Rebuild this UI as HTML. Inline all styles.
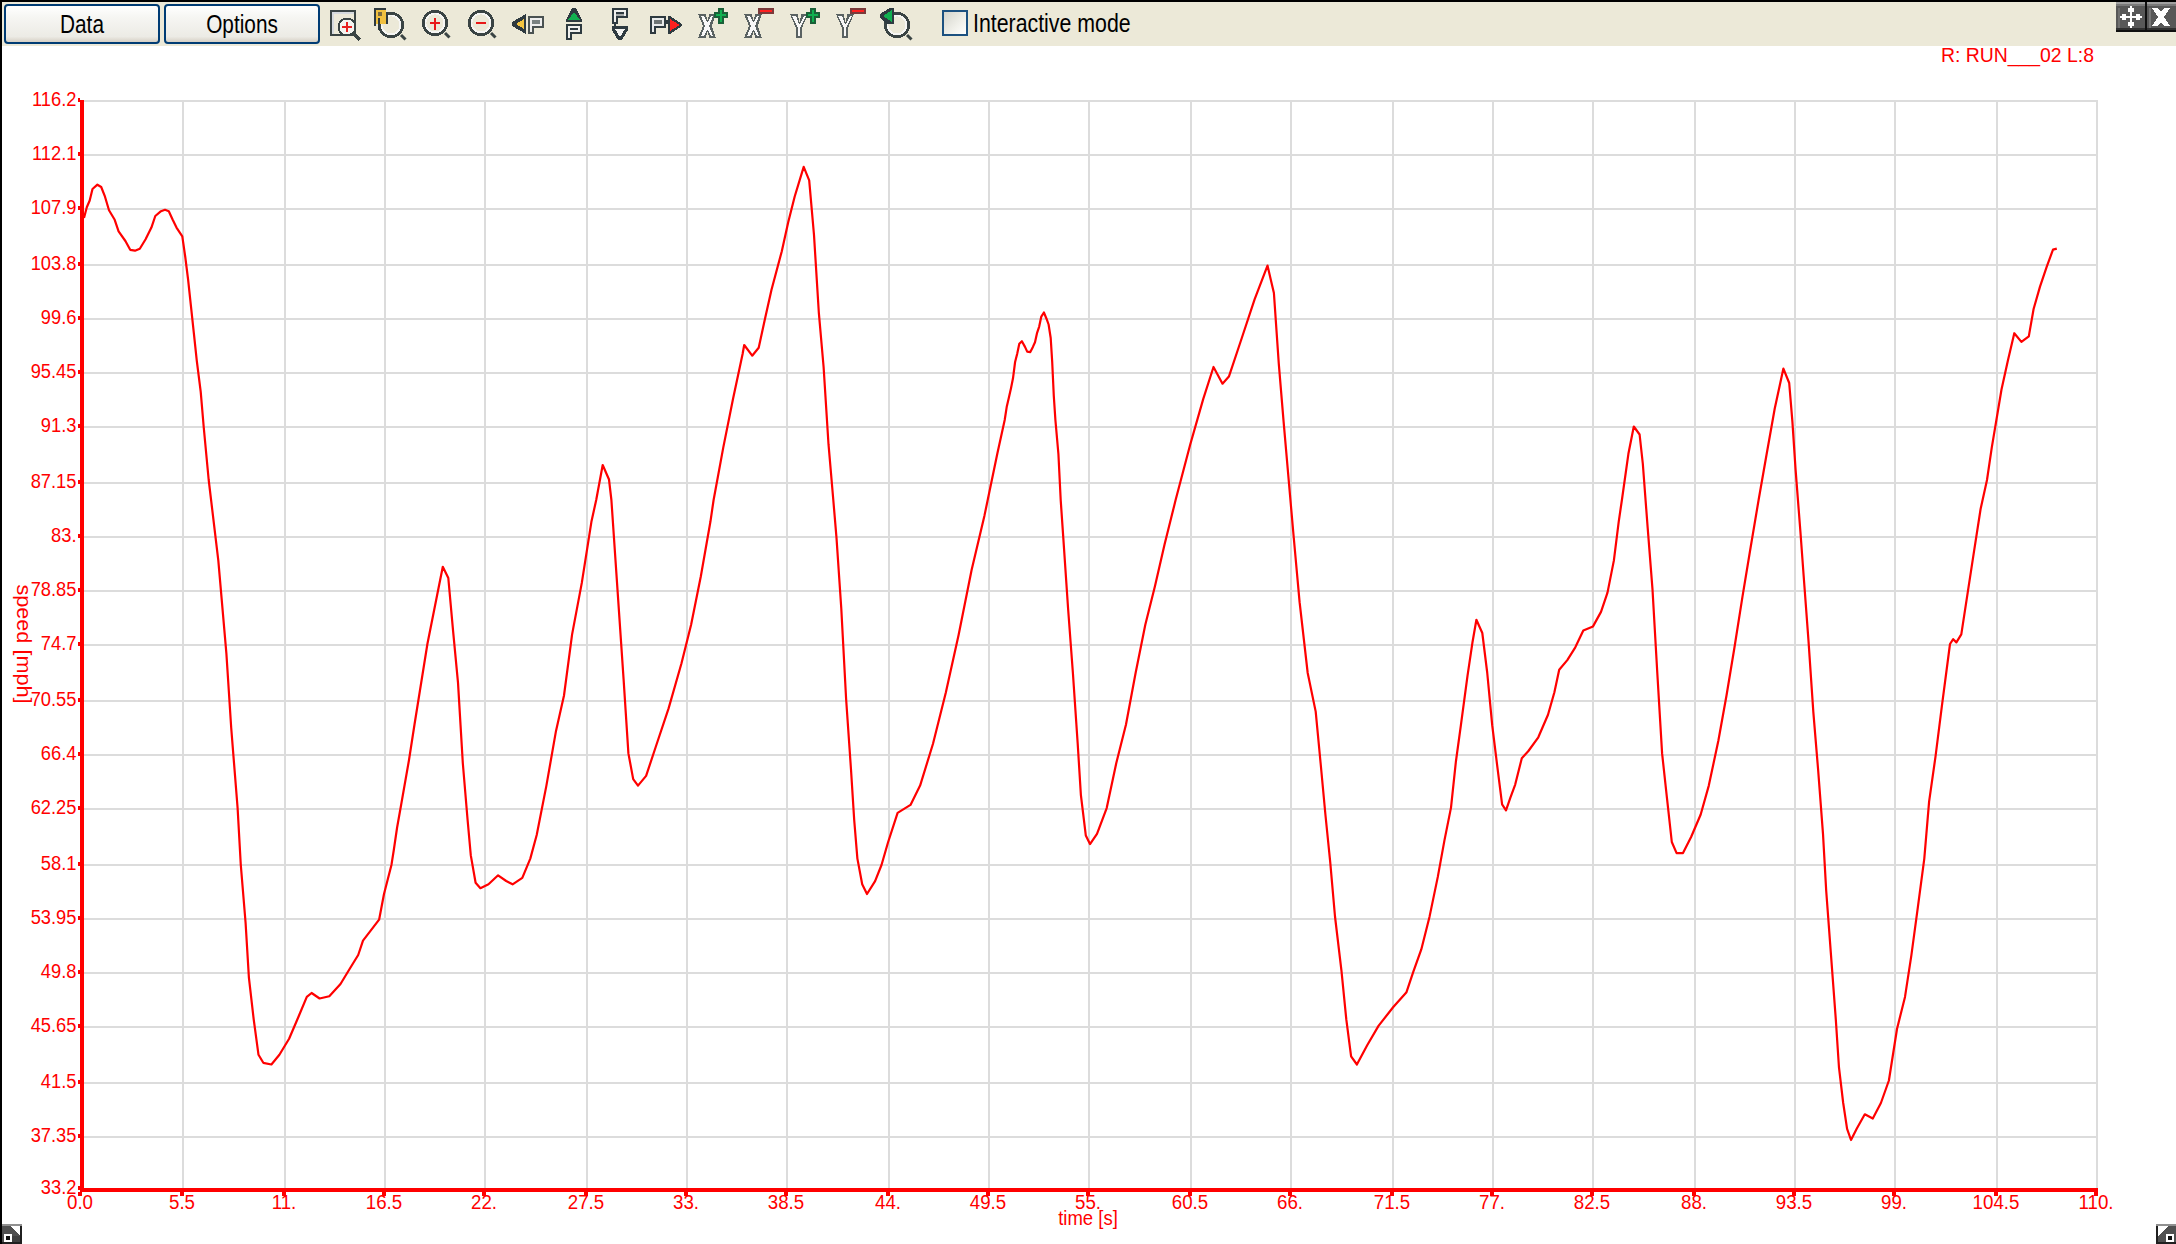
<!DOCTYPE html>
<html><head><meta charset="utf-8">
<style>
html,body{margin:0;padding:0;width:2176px;height:1244px;overflow:hidden;background:#fff;position:relative;font-family:"Liberation Sans",sans-serif;}
.bl{position:absolute;left:0;top:0;width:2px;height:1244px;background:#000}
.bt{position:absolute;left:0;top:0;width:2176px;height:2px;background:#000}
.tb{position:absolute;left:2px;top:2px;width:2174px;height:44px;background:#ece9d8}
.btn{position:absolute;top:4px;height:36px;width:152px;border:2px solid #003c74;border-radius:4px;background:linear-gradient(#ffffff 0%,#f6f6f3 30%,#ecebe5 85%,#d6d0c5 100%);}
.btn span{position:absolute;left:0;right:0;top:4.5px;text-align:center;font-size:25.7px;line-height:26px;color:#000;transform:scaleX(0.81);}
.yl{position:absolute;left:0;width:76.5px;text-align:right;color:#ff0000;font-size:19.7px;line-height:20px;transform-origin:100% 50%;transform:scaleX(0.93);}
.xl{position:absolute;top:1192px;width:80px;text-align:center;color:#ff0000;font-size:19.7px;line-height:20px;transform:scaleX(0.95);}
svg{position:absolute;left:0;top:0}
</style></head><body>
<div class="tb"></div>
<div class="bt"></div><div class="bl"></div>
<div class="btn" style="left:4px"><span>Data</span></div>
<div class="btn" style="left:164px"><span>Options</span></div>
<svg width="2176" height="50" viewBox="0 0 2176 50" style="position:absolute;left:0;top:0" shape-rendering="crispEdges">

<!-- icon 1: zoom box -->
<rect x="331" y="11" width="24" height="24" fill="none" stroke="#3a4444" stroke-width="2"/>
<rect x="332" y="12" width="22" height="2" fill="#d6dade"/>
<rect x="332" y="12" width="2" height="22" fill="#d6dade"/>
<circle cx="347" cy="27" r="8.5" fill="#f4f4f0" stroke="#3a4444" stroke-width="2"/>
<rect x="342" y="26" width="10" height="2" fill="#e82020"/>
<rect x="346" y="22" width="2" height="10" fill="#e82020"/>
<line x1="355" y1="35" x2="360" y2="40" stroke="#3a4444" stroke-width="3"/>
<!-- icon 2: zoom R -->
<g transform="translate(391,25)">
  <circle cx="0" cy="0" r="11.8" fill="none" stroke="#3a4444" stroke-width="2.6"/>
  <circle cx="0" cy="0" r="9.5" fill="none" stroke="#f6f6f4" stroke-width="1.8"/>
  <line x1="10" y1="10" x2="14.5" y2="14.5" stroke="#3a4444" stroke-width="3" shape-rendering="auto"/>
</g>
<rect x="374" y="8" width="12" height="2" fill="#2e3a40"/>
<rect x="374" y="8" width="2" height="18" fill="#2e3a40"/>
<rect x="376" y="10" width="10" height="14" fill="#f0c040"/>
<rect x="378" y="12" width="4" height="4" fill="#7a6a40"/>
<rect x="386" y="12" width="2" height="12" fill="#2e3a40"/>
<rect x="378" y="18" width="2" height="12" fill="#2e3a40"/>
<!-- icon 3: zoom in -->
<g transform="translate(435,23)">
  <circle cx="0" cy="0" r="11.8" fill="none" stroke="#3a4444" stroke-width="2.6"/>
  <circle cx="0" cy="0" r="9.5" fill="none" stroke="#f6f6f4" stroke-width="1.8"/>
  <line x1="10" y1="10" x2="14.5" y2="14.5" stroke="#3a4444" stroke-width="3" shape-rendering="auto"/>
</g>
<rect x="430" y="22" width="10" height="2" fill="#e81818"/>
<rect x="434" y="18" width="2" height="12" fill="#e81818"/>
<!-- icon 4: zoom out -->
<g transform="translate(481,23)">
  <circle cx="0" cy="0" r="11.8" fill="none" stroke="#3a4444" stroke-width="2.6"/>
  <circle cx="0" cy="0" r="9.5" fill="none" stroke="#f6f6f4" stroke-width="1.8"/>
  <line x1="10" y1="10" x2="14.5" y2="14.5" stroke="#3a4444" stroke-width="3" shape-rendering="auto"/>
</g>
<rect x="476" y="22" width="10" height="2" fill="#e81818"/>
<!-- icon 5: yellow left arrow + P -->
<polygon points="512,22 526,14 526,34 512,26" fill="#2e3a40"/>
<polygon points="516,24 524,19 524,29" fill="#f4c440"/>
<rect x="528" y="16" width="16" height="12" fill="#4a5252"/>
<rect x="528" y="16" width="6" height="18" fill="#4a5252"/>
<rect x="530" y="18" width="12" height="8" fill="#eeeeee"/>
<rect x="530" y="18" width="2" height="14" fill="#eeeeee"/>
<rect x="532" y="20" width="8" height="4" fill="#7a8282"/>
<!-- icon 6: green up + P -->
<polygon points="572,8 576,8 582,20 582,22 566,22 566,20" fill="#2e3a40"/>
<polygon points="574,12 580,20 568,20" fill="#10b050"/>
<rect x="566" y="24" width="16" height="10" fill="#2e3a40"/>
<rect x="566" y="24" width="6" height="16" fill="#2e3a40"/>
<rect x="568" y="26" width="12" height="6" fill="#f0f0ee"/>
<rect x="568" y="26" width="2" height="12" fill="#f0f0ee"/>
<rect x="570" y="28" width="8" height="2" fill="#2e3a40"/>
<!-- icon 7: P + down triangle -->
<rect x="612" y="8" width="16" height="10" fill="#2e3a40"/>
<rect x="612" y="8" width="6" height="16" fill="#2e3a40"/>
<rect x="614" y="10" width="12" height="6" fill="#f0f0ee"/>
<rect x="614" y="10" width="2" height="12" fill="#f0f0ee"/>
<rect x="616" y="12" width="8" height="2" fill="#2e3a40"/>
<rect x="616" y="14" width="8" height="2" fill="#a4a8a8"/>
<rect x="614" y="24" width="2" height="2" fill="#2e3a40"/>
<polygon points="612,26 628,26 628,30 622,40 618,40 612,30" fill="#2e3a40"/>
<polygon points="615,29 625,29 620,37" fill="#f4f4f2"/>
<!-- icon 8: P + red right arrow -->
<rect x="650" y="16" width="16" height="12" fill="#2e3a40"/>
<rect x="650" y="16" width="6" height="18" fill="#2e3a40"/>
<rect x="652" y="18" width="12" height="8" fill="#e8eaea"/>
<rect x="652" y="18" width="2" height="14" fill="#e8eaea"/>
<rect x="654" y="20" width="8" height="4" fill="#6e7474"/>
<rect x="666" y="20" width="2" height="4" fill="#2e3a40"/>
<polygon points="668,16 670,16 682,24 682,26 670,34 668,34" fill="#2e3a40"/>
<polygon points="670,19 680,25 670,31" fill="#ff2020"/>
<!-- icon 9: X+ -->
<g>
<polygon points="698,14 706,14 707,20 708,20 709,14 716,14 712,26 716,38 709,38 708,32 707,32 706,38 698,38 703,26" fill="#5a6262"/>
<polygon points="701,16 704,16 707,22 708,22 711,16 713,16 709,26 713,36 711,36 708,30 707,30 704,36 701,36 705,26" fill="#f8f8f8"/>
</g>
<rect x="718" y="8" width="6" height="16" fill="#1a6038"/>
<rect x="714" y="12" width="14" height="6" fill="#1a6038"/>
<rect x="720" y="10" width="2" height="12" fill="#10b050"/>
<rect x="716" y="14" width="10" height="2" fill="#10b050"/>
<!-- icon 10: X- -->
<g transform="translate(46,0)">
<polygon points="698,14 706,14 707,20 708,20 709,14 716,14 712,26 716,38 709,38 708,32 707,32 706,38 698,38 703,26" fill="#5a6262"/>
<polygon points="701,16 704,16 707,22 708,22 711,16 713,16 709,26 713,36 711,36 708,30 707,30 704,36 701,36 705,26" fill="#f8f8f8"/>
</g>
<rect x="758" y="8" width="16" height="6" fill="#7a3a3a"/>
<rect x="760" y="10" width="12" height="2" fill="#ff2020"/>
<!-- icon 11: Y+ -->
<g>
<polygon points="790,14 798,14 799,22 800,22 801,14 808,14 802,28 802,38 796,38 796,28" fill="#5a6262"/>
<polygon points="792,16 796,16 799,24 800,24 804,16 806,16 800,28 800,36 798,36 798,28" fill="#f8f8f8"/>
</g>
<rect x="810" y="8" width="6" height="16" fill="#1a6038"/>
<rect x="806" y="12" width="14" height="6" fill="#1a6038"/>
<rect x="812" y="10" width="2" height="12" fill="#10b050"/>
<rect x="808" y="14" width="10" height="2" fill="#10b050"/>
<!-- icon 12: Y- -->
<g transform="translate(46,0)">
<polygon points="790,14 798,14 799,22 800,22 801,14 808,14 802,28 802,38 796,38 796,28" fill="#5a6262"/>
<polygon points="792,16 796,16 799,24 800,24 804,16 806,16 800,28 800,36 798,36 798,28" fill="#f8f8f8"/>
</g>
<rect x="850" y="8" width="16" height="6" fill="#7a3a3a"/>
<rect x="852" y="10" width="12" height="2" fill="#ff2020"/>
<!-- icon 13: reset -->
<g transform="translate(897,25)">
  <circle cx="0" cy="0" r="11.8" fill="none" stroke="#3a4444" stroke-width="2.6"/>
  <circle cx="0" cy="0" r="9.5" fill="none" stroke="#f6f6f4" stroke-width="1.8"/>
  <line x1="10" y1="10" x2="14.5" y2="14.5" stroke="#3a4444" stroke-width="3" shape-rendering="auto"/>
</g>
<polygon points="880,14 890,8 894,8 894,24 886,24 880,18" fill="#2e3a40"/>
<polygon points="883,16 892,10 892,22" fill="#10b050"/>
</svg>
<div style="position:absolute;left:942px;top:10px;width:22px;height:22px;border:2px solid #1c5180;background:linear-gradient(135deg,#d4d4cc 0%,#f0f0ea 60%,#ffffff 100%)"></div>
<div style="position:absolute;left:973px;top:9px;font-size:25.7px;line-height:28px;color:#000;transform-origin:0 50%;transform:scaleX(0.83)">Interactive mode</div>
<div style="position:absolute;left:2116px;top:2px;width:60px;height:30px;background:#101010"></div>
<svg width="60" height="30" viewBox="0 0 60 30" style="position:absolute;left:2116px;top:2px" shape-rendering="crispEdges">
<rect x="0" y="0" width="29" height="28" fill="#585858"/>
<rect x="0" y="0" width="29" height="2" fill="#a0a0a0"/>
<rect x="0" y="2" width="29" height="2" fill="#7a7a7a"/>
<rect x="0" y="26" width="29" height="2" fill="#303030"/>
<rect x="2" y="6" width="2" height="20" fill="#707070"/>
<rect x="31" y="0" width="29" height="28" fill="#585858"/>
<rect x="31" y="0" width="29" height="2" fill="#a0a0a0"/>
<rect x="31" y="2" width="29" height="2" fill="#7a7a7a"/>
<rect x="31" y="26" width="29" height="2" fill="#303030"/>
<rect x="33" y="6" width="2" height="20" fill="#787878"/>
<!-- move arrows -->
<rect x="14" y="4" width="2" height="22" fill="#ffffff"/>
<rect x="4" y="14" width="22" height="2" fill="#ffffff"/>
<rect x="12" y="6" width="6" height="4" fill="#ffffff"/>
<rect x="12" y="20" width="6" height="4" fill="#ffffff"/>
<rect x="6" y="12" width="4" height="6" fill="#ffffff"/>
<rect x="20" y="12" width="4" height="6" fill="#ffffff"/>
<!-- close X -->
<polygon points="36,6 42,6 45,10 48,6 54,6 48,15 54,24 48,24 45,20 42,24 36,24 42,15" fill="#ffffff"/>
</svg>
<svg width="20" height="20" viewBox="0 0 20 20" style="position:absolute;left:2px;top:1224px" shape-rendering="crispEdges">
<rect x="0" y="0" width="20" height="20" fill="#202020"/>
<rect x="0" y="0" width="20" height="2" fill="#909090"/>
<rect x="0" y="2" width="18" height="16" fill="#505050"/>
<polygon points="8,2 18,2 18,12" fill="#ffffff"/>
<rect x="2" y="10" width="8" height="8" fill="#ffffff"/>
<rect x="4" y="12" width="4" height="4" fill="#101010"/>
<rect x="10" y="12" width="8" height="6" fill="#404040"/>
</svg>
<svg width="20" height="20" viewBox="0 0 20 20" style="position:absolute;left:2156px;top:1224px" shape-rendering="crispEdges">
<rect x="0" y="0" width="20" height="20" fill="#202020"/>
<rect x="0" y="0" width="20" height="2" fill="#909090"/>
<rect x="2" y="2" width="18" height="16" fill="#505050"/>
<polygon points="2,2 12,2 2,12" fill="#ffffff"/>
<rect x="10" y="10" width="8" height="8" fill="#ffffff"/>
<rect x="12" y="12" width="4" height="4" fill="#101010"/>
</svg>

<svg width="2176" height="1244" viewBox="0 0 2176 1244">
<rect x="84" y="100" width="2014" height="2" fill="#dcdcdc"/><rect x="84" y="154" width="2014" height="2" fill="#dcdcdc"/><rect x="84" y="208" width="2014" height="2" fill="#dcdcdc"/><rect x="84" y="264" width="2014" height="2" fill="#dcdcdc"/><rect x="84" y="318" width="2014" height="2" fill="#dcdcdc"/><rect x="84" y="372" width="2014" height="2" fill="#dcdcdc"/><rect x="84" y="426" width="2014" height="2" fill="#dcdcdc"/><rect x="84" y="482" width="2014" height="2" fill="#dcdcdc"/><rect x="84" y="536" width="2014" height="2" fill="#dcdcdc"/><rect x="84" y="590" width="2014" height="2" fill="#dcdcdc"/><rect x="84" y="644" width="2014" height="2" fill="#dcdcdc"/><rect x="84" y="700" width="2014" height="2" fill="#dcdcdc"/><rect x="84" y="754" width="2014" height="2" fill="#dcdcdc"/><rect x="84" y="808" width="2014" height="2" fill="#dcdcdc"/><rect x="84" y="864" width="2014" height="2" fill="#dcdcdc"/><rect x="84" y="918" width="2014" height="2" fill="#dcdcdc"/><rect x="84" y="972" width="2014" height="2" fill="#dcdcdc"/><rect x="84" y="1026" width="2014" height="2" fill="#dcdcdc"/><rect x="84" y="1082" width="2014" height="2" fill="#dcdcdc"/><rect x="84" y="1136" width="2014" height="2" fill="#dcdcdc"/><rect x="182" y="100" width="2" height="1088" fill="#dcdcdc"/><rect x="284" y="100" width="2" height="1088" fill="#dcdcdc"/><rect x="384" y="100" width="2" height="1088" fill="#dcdcdc"/><rect x="484" y="100" width="2" height="1088" fill="#dcdcdc"/><rect x="586" y="100" width="2" height="1088" fill="#dcdcdc"/><rect x="686" y="100" width="2" height="1088" fill="#dcdcdc"/><rect x="786" y="100" width="2" height="1088" fill="#dcdcdc"/><rect x="888" y="100" width="2" height="1088" fill="#dcdcdc"/><rect x="988" y="100" width="2" height="1088" fill="#dcdcdc"/><rect x="1088" y="100" width="2" height="1088" fill="#dcdcdc"/><rect x="1190" y="100" width="2" height="1088" fill="#dcdcdc"/><rect x="1290" y="100" width="2" height="1088" fill="#dcdcdc"/><rect x="1392" y="100" width="2" height="1088" fill="#dcdcdc"/><rect x="1492" y="100" width="2" height="1088" fill="#dcdcdc"/><rect x="1592" y="100" width="2" height="1088" fill="#dcdcdc"/><rect x="1694" y="100" width="2" height="1088" fill="#dcdcdc"/><rect x="1794" y="100" width="2" height="1088" fill="#dcdcdc"/><rect x="1894" y="100" width="2" height="1088" fill="#dcdcdc"/><rect x="1996" y="100" width="2" height="1088" fill="#dcdcdc"/><rect x="2096" y="100" width="2" height="1088" fill="#dcdcdc"/><rect x="80" y="100" width="4" height="1092" fill="#ff0000"/><rect x="80" y="1188" width="2018" height="4" fill="#ff0000"/><rect x="78" y="98" width="2" height="4" fill="#ff0000"/><rect x="78" y="152" width="2" height="4" fill="#ff0000"/><rect x="78" y="206" width="2" height="4" fill="#ff0000"/><rect x="78" y="262" width="2" height="4" fill="#ff0000"/><rect x="78" y="316" width="2" height="4" fill="#ff0000"/><rect x="78" y="370" width="2" height="4" fill="#ff0000"/><rect x="78" y="424" width="2" height="4" fill="#ff0000"/><rect x="78" y="480" width="2" height="4" fill="#ff0000"/><rect x="78" y="534" width="2" height="4" fill="#ff0000"/><rect x="78" y="588" width="2" height="4" fill="#ff0000"/><rect x="78" y="642" width="2" height="4" fill="#ff0000"/><rect x="78" y="698" width="2" height="4" fill="#ff0000"/><rect x="78" y="752" width="2" height="4" fill="#ff0000"/><rect x="78" y="806" width="2" height="4" fill="#ff0000"/><rect x="78" y="862" width="2" height="4" fill="#ff0000"/><rect x="78" y="916" width="2" height="4" fill="#ff0000"/><rect x="78" y="970" width="2" height="4" fill="#ff0000"/><rect x="78" y="1024" width="2" height="4" fill="#ff0000"/><rect x="78" y="1080" width="2" height="4" fill="#ff0000"/><rect x="78" y="1134" width="2" height="4" fill="#ff0000"/><rect x="78" y="1186" width="2" height="4" fill="#ff0000"/><rect x="78" y="1192" width="4" height="4" fill="#ff0000"/><rect x="180" y="1192" width="4" height="4" fill="#ff0000"/><rect x="282" y="1192" width="4" height="4" fill="#ff0000"/><rect x="382" y="1192" width="4" height="4" fill="#ff0000"/><rect x="482" y="1192" width="4" height="4" fill="#ff0000"/><rect x="584" y="1192" width="4" height="4" fill="#ff0000"/><rect x="684" y="1192" width="4" height="4" fill="#ff0000"/><rect x="784" y="1192" width="4" height="4" fill="#ff0000"/><rect x="886" y="1192" width="4" height="4" fill="#ff0000"/><rect x="986" y="1192" width="4" height="4" fill="#ff0000"/><rect x="1086" y="1192" width="4" height="4" fill="#ff0000"/><rect x="1188" y="1192" width="4" height="4" fill="#ff0000"/><rect x="1288" y="1192" width="4" height="4" fill="#ff0000"/><rect x="1390" y="1192" width="4" height="4" fill="#ff0000"/><rect x="1490" y="1192" width="4" height="4" fill="#ff0000"/><rect x="1590" y="1192" width="4" height="4" fill="#ff0000"/><rect x="1692" y="1192" width="4" height="4" fill="#ff0000"/><rect x="1792" y="1192" width="4" height="4" fill="#ff0000"/><rect x="1892" y="1192" width="4" height="4" fill="#ff0000"/><rect x="1994" y="1192" width="4" height="4" fill="#ff0000"/><rect x="2094" y="1192" width="4" height="4" fill="#ff0000"/><polyline points="84.0,218.0 86.8,207.3 89.7,200.5 92.5,189.0 97.4,184.7 101.2,187.0 105.0,196.7 109.0,210.2 114.7,219.8 118.6,231.4 125.4,241.0 130.2,249.8 135.0,250.7 139.8,248.8 145.6,239.2 151.4,227.6 155.3,216.0 161.0,211.2 165.0,209.8 168.8,211.2 172.7,219.8 176.5,227.6 182.3,236.3 185.2,256.5 188.1,279.7 191.0,306.7 193.9,333.7 196.8,360.8 200.7,391.7 203.8,428.0 208.7,480.0 218.3,560.4 226.4,653.7 231.2,727.7 237.6,808.0 240.8,865.0 245.6,923.0 248.9,977.6 253.7,1019.4 258.5,1054.8 263.3,1062.8 271.4,1064.5 279.4,1054.8 289.1,1038.7 298.7,1016.2 306.8,996.9 311.6,993.0 319.6,998.5 329.3,996.3 340.5,984.0 350.2,968.0 358.2,955.0 363.0,940.6 379.1,919.7 384.0,894.0 391.5,864.7 393.8,850.0 397.1,827.5 401.1,805.0 409.0,760.0 414.5,724.5 427.4,644.0 437.0,595.8 442.8,566.8 448.3,578.0 453.1,631.2 458.0,682.6 462.8,763.0 467.6,820.0 470.8,855.4 475.6,882.7 480.4,888.2 488.5,884.3 498.1,875.3 506.2,881.0 512.6,884.3 522.3,877.9 530.3,858.6 536.7,835.0 546.4,785.6 556.0,730.9 564.0,695.5 572.1,634.4 581.8,582.9 591.4,521.8 596.2,500.0 602.7,465.0 609.0,479.5 611.4,500.0 615.5,560.4 623.6,679.4 628.4,753.4 633.2,779.1 638.0,785.6 646.1,775.9 655.7,747.0 668.6,708.4 681.5,663.3 691.1,624.7 700.8,576.5 710.4,521.8 713.6,500.0 723.3,447.4 733.0,399.0 742.6,354.0 744.2,345.0 752.2,355.7 758.7,347.7 765.0,318.7 771.5,289.8 781.8,251.2 788.2,222.2 794.7,196.5 803.7,166.9 809.2,180.4 814.0,235.0 818.8,312.3 823.6,367.0 828.5,444.2 833.3,500.0 836.5,537.9 841.3,608.7 846.1,698.7 851.0,769.5 854.2,820.0 857.4,858.6 862.2,884.3 867.0,894.0 875.1,881.1 881.5,865.0 888.0,842.5 897.6,812.9 910.5,804.9 920.1,785.6 933.0,743.8 945.9,692.3 958.7,634.4 971.6,570.0 984.5,515.4 987.7,500.0 997.3,453.8 1004.7,420.0 1006.8,406.4 1008.9,397.6 1011.0,388.2 1013.0,378.3 1015.1,362.0 1017.2,353.7 1019.3,343.8 1021.9,341.2 1025.0,346.9 1027.2,351.6 1030.3,352.1 1032.9,346.9 1035.0,342.2 1037.1,332.8 1039.2,326.6 1041.3,316.6 1043.9,312.5 1046.5,318.7 1048.6,324.5 1050.7,338.0 1052.2,362.0 1053.8,396.0 1055.4,420.0 1058.4,453.8 1060.7,500.0 1063.3,537.9 1068.1,608.7 1072.9,673.0 1077.7,743.8 1080.9,795.2 1085.8,835.4 1090.0,844.1 1097.0,833.8 1106.7,808.1 1116.3,763.0 1126.0,724.5 1135.6,673.0 1145.3,624.7 1155.0,586.1 1164.6,544.3 1174.2,505.7 1175.6,500.0 1190.3,444.2 1203.2,399.1 1213.5,367.0 1222.5,383.7 1228.9,376.6 1241.8,338.0 1254.6,299.4 1267.5,265.6 1273.9,293.0 1278.8,363.8 1283.6,421.6 1290.0,495.0 1293.2,531.5 1299.6,602.2 1307.7,673.0 1315.7,711.6 1320.6,763.0 1325.4,814.5 1330.2,861.8 1335.0,916.5 1341.5,971.2 1346.3,1019.4 1351.1,1056.4 1356.9,1064.5 1367.2,1045.2 1378.5,1025.9 1393.3,1007.0 1406.5,992.2 1413.1,972.4 1421.3,949.4 1429.6,916.4 1437.8,876.9 1444.4,840.6 1451.0,807.6 1455.9,761.5 1460.9,725.2 1467.5,675.8 1472.4,642.8 1476.4,619.8 1482.3,633.0 1487.2,672.5 1492.2,725.2 1497.1,764.8 1502.1,804.4 1506.0,810.3 1510.3,797.8 1515.2,784.6 1521.8,758.2 1528.4,751.0 1538.3,737.3 1548.0,714.8 1554.4,692.3 1559.2,669.8 1567.3,660.1 1575.3,647.3 1583.3,630.5 1593.0,626.4 1601.0,611.9 1607.5,592.6 1613.9,560.4 1618.7,521.8 1621.9,500.0 1628.4,453.8 1633.8,426.5 1639.6,434.5 1642.8,463.5 1647.7,528.2 1652.5,589.4 1657.3,673.0 1662.1,753.4 1667.0,798.4 1671.8,842.0 1676.6,853.1 1683.0,853.1 1691.1,837.0 1700.7,814.5 1708.8,785.6 1718.4,740.5 1726.5,695.5 1734.5,647.3 1742.6,595.8 1750.6,547.5 1758.6,500.0 1766.7,453.8 1774.7,408.8 1783.4,368.6 1789.2,383.0 1792.4,421.6 1795.6,469.9 1800.4,531.5 1803.7,576.5 1808.5,640.8 1813.3,711.6 1818.1,769.5 1823.0,833.8 1826.2,890.8 1831.0,955.1 1835.8,1019.4 1839.0,1067.7 1843.2,1103.0 1847.1,1128.8 1851.0,1140.0 1856.7,1128.8 1864.8,1114.3 1872.8,1118.5 1880.9,1103.0 1888.9,1080.5 1897.0,1029.0 1905.0,996.9 1911.4,955.1 1917.9,906.8 1924.3,858.6 1929.1,801.6 1935.5,756.6 1942.0,705.2 1950.0,644.0 1953.2,639.2 1956.4,642.4 1961.3,634.4 1967.7,592.6 1974.1,550.8 1980.6,509.0 1987.0,480.0 1991.8,447.4 2001.5,389.5 2007.9,360.5 2014.3,333.2 2021.4,341.9 2028.8,336.4 2033.6,309.0 2040.0,286.6 2046.5,267.3 2053.0,249.6 2056.8,248.6" fill="none" stroke="#ff0000" stroke-width="2.2" stroke-linejoin="round"/>
</svg>
<div class="yl" style="top:89px">116.2</div><div class="yl" style="top:143px">112.1</div><div class="yl" style="top:197px">107.9</div><div class="yl" style="top:253px">103.8</div><div class="yl" style="top:307px">99.6</div><div class="yl" style="top:361px">95.45</div><div class="yl" style="top:415px">91.3</div><div class="yl" style="top:471px">87.15</div><div class="yl" style="top:525px">83.</div><div class="yl" style="top:579px">78.85</div><div class="yl" style="top:633px">74.7</div><div class="yl" style="top:689px">70.55</div><div class="yl" style="top:743px">66.4</div><div class="yl" style="top:797px">62.25</div><div class="yl" style="top:853px">58.1</div><div class="yl" style="top:907px">53.95</div><div class="yl" style="top:961px">49.8</div><div class="yl" style="top:1015px">45.65</div><div class="yl" style="top:1071px">41.5</div><div class="yl" style="top:1125px">37.35</div><div class="yl" style="top:1177px">33.2</div><div class="xl" style="left:40px">0.0</div><div class="xl" style="left:142px">5.5</div><div class="xl" style="left:244px">11.</div><div class="xl" style="left:344px">16.5</div><div class="xl" style="left:444px">22.</div><div class="xl" style="left:546px">27.5</div><div class="xl" style="left:646px">33.</div><div class="xl" style="left:746px">38.5</div><div class="xl" style="left:848px">44.</div><div class="xl" style="left:948px">49.5</div><div class="xl" style="left:1048px">55.</div><div class="xl" style="left:1150px">60.5</div><div class="xl" style="left:1250px">66.</div><div class="xl" style="left:1352px">71.5</div><div class="xl" style="left:1452px">77.</div><div class="xl" style="left:1552px">82.5</div><div class="xl" style="left:1654px">88.</div><div class="xl" style="left:1754px">93.5</div><div class="xl" style="left:1854px">99.</div><div class="xl" style="left:1956px">104.5</div><div class="xl" style="left:2056px">110.</div>
<div style="position:absolute;left:1040px;top:1206px;width:96px;text-align:center;color:#ff0000;font-size:19.7px;line-height:24px;transform:scaleX(0.94)">time [s]</div>
<div style="position:absolute;left:-99px;top:634px;width:246px;height:20px;text-align:center;color:#ff0000;font-size:19.7px;line-height:20px;transform:rotate(90deg) scaleX(1.1)">speed [mph]</div>
<div style="position:absolute;left:1928px;top:43px;width:166px;text-align:right;color:#ff0000;font-size:19.7px;line-height:24px;transform-origin:100% 50%;transform:scaleX(0.985)">R: RUN___02 L:8</div>
</body></html>
